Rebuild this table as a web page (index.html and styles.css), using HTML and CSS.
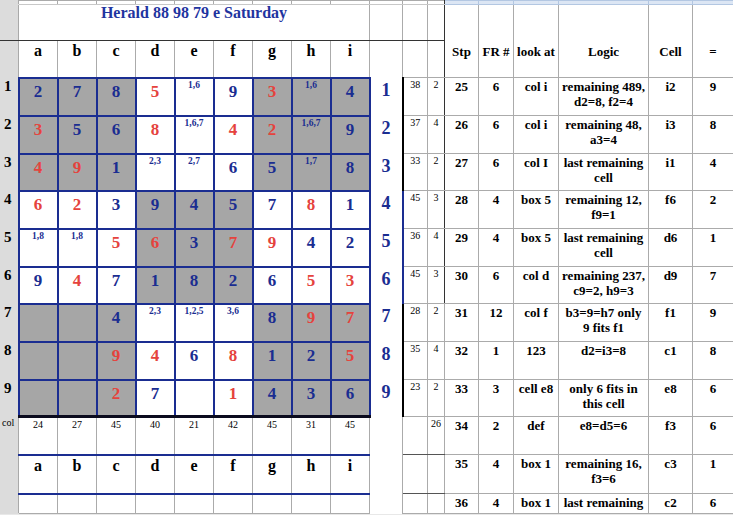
FILE: index.html
```
<!DOCTYPE html>
<html>
<head>
<meta charset="utf-8">
<link rel="stylesheet" href="styles.css">
</head>
<body>
<table class="sheet">
<colgroup>
<col class="w-hd"><col class="w-g"><col class="w-g"><col class="w-g"><col class="w-g"><col class="w-g"><col class="w-g"><col class="w-g"><col class="w-g"><col class="w-g"><col class="w-rn"><col class="w-s1"><col class="w-s2"><col class="w-stp"><col class="w-fr"><col class="w-look"><col class="w-lg"><col class="w-cell"><col class="w-eq">
</colgroup>
<tr class="r-strip"><td class="hd"></td><td></td><td></td><td></td><td></td><td></td><td></td><td></td><td></td><td></td><td></td><td></td><td class="dk"></td><td class="sel"></td><td class="sel"></td><td class="sel"></td><td class="sel"></td><td class="sel"></td><td class="sel"></td></tr>
<tr class="r-title"><td class="hd"></td><td colspan="9" class="ttl">Herald 88 98 79 e Saturday</td><td></td><td></td><td class="dk"></td><td class="open"></td><td class="open"></td><td class="open"></td><td class="open"></td><td class="open"></td><td class="open"></td></tr>
<tr class="r-hdr"><td class="hd"></td><td class="let">a</td><td class="let">b</td><td class="let">c</td><td class="let">d</td><td class="let">e</td><td class="let">f</td><td class="let">g</td><td class="let">h</td><td class="let">i</td><td></td><td></td><td class="dk"></td><td class="th">Stp</td><td class="th">FR #</td><td class="th">look at</td><td class="th">Logic</td><td class="th">Cell</td><td class="th">=</td></tr>
<tr class="r-38"><td class="hd rh">1</td><td class="g s">2</td><td class="g s">7</td><td class="g s">8</td><td class="g r">5</td><td class="g n">1,6</td><td class="g">9</td><td class="g s r">3</td><td class="g s n">1,6</td><td class="g s">4</td><td class="rn">1</td><td class="sm">38</td><td class="sm dk">2</td><td class="rt">25</td><td class="rt">6</td><td class="rt">col i</td><td class="rt lg">remaining 489, d2=8, f2=4</td><td class="rt">i2</td><td class="rt">9</td></tr>
<tr class="r-38"><td class="hd rh">2</td><td class="g s r">3</td><td class="g s">5</td><td class="g s">6</td><td class="g r">8</td><td class="g n">1,6,7</td><td class="g r">4</td><td class="g s r">2</td><td class="g s n">1,6,7</td><td class="g s">9</td><td class="rn">2</td><td class="sm">37</td><td class="sm dk">4</td><td class="rt">26</td><td class="rt">6</td><td class="rt">col i</td><td class="rt lg">remaining 48, a3=4</td><td class="rt">i3</td><td class="rt">8</td></tr>
<tr class="r-37"><td class="hd rh">3</td><td class="g s r">4</td><td class="g s r">9</td><td class="g s">1</td><td class="g n">2,3</td><td class="g n">2,7</td><td class="g">6</td><td class="g s">5</td><td class="g s n">1,7</td><td class="g s">8</td><td class="rn">3</td><td class="sm">33</td><td class="sm dk">2</td><td class="rt">27</td><td class="rt">6</td><td class="rt">col I</td><td class="rt lg">last remaining cell</td><td class="rt">i1</td><td class="rt">4</td></tr>
<tr class="r-38"><td class="hd rh">4</td><td class="g r">6</td><td class="g r">2</td><td class="g">3</td><td class="g s">9</td><td class="g s">4</td><td class="g s">5</td><td class="g">7</td><td class="g r">8</td><td class="g">1</td><td class="rn bl">4</td><td class="sm">45</td><td class="sm dk">3</td><td class="rt">28</td><td class="rt">4</td><td class="rt">box 5</td><td class="rt lg">remaining 12, f9=1</td><td class="rt">f6</td><td class="rt">2</td></tr>
<tr class="r-38"><td class="hd rh">5</td><td class="g n">1,8</td><td class="g n">1,8</td><td class="g r">5</td><td class="g s r">6</td><td class="g s">3</td><td class="g s r">7</td><td class="g r">9</td><td class="g">4</td><td class="g">2</td><td class="rn bl">5</td><td class="sm">36</td><td class="sm dk">4</td><td class="rt">29</td><td class="rt">4</td><td class="rt">box 5</td><td class="rt lg">last remaining cell</td><td class="rt">d6</td><td class="rt">1</td></tr>
<tr class="r-37"><td class="hd rh">6</td><td class="g">9</td><td class="g r">4</td><td class="g">7</td><td class="g s">1</td><td class="g s">8</td><td class="g s">2</td><td class="g">6</td><td class="g r">5</td><td class="g r">3</td><td class="rn bl">6</td><td class="sm">45</td><td class="sm dk">3</td><td class="rt">30</td><td class="rt">6</td><td class="rt">col d</td><td class="rt lg">remaining 237, c9=2, h9=3</td><td class="rt">d9</td><td class="rt">7</td></tr>
<tr class="r-38"><td class="hd rh">7</td><td class="g s"></td><td class="g s"></td><td class="g s">4</td><td class="g n">2,3</td><td class="g n">1,2,5</td><td class="g n">3,6</td><td class="g s">8</td><td class="g s r">9</td><td class="g s r">7</td><td class="rn">7</td><td class="sm">28</td><td class="sm">2</td><td class="rt">31</td><td class="rt">12</td><td class="rt">col f</td><td class="rt lg">b3=9=h7 only 9 fits f1</td><td class="rt">f1</td><td class="rt">9</td></tr>
<tr class="r-38"><td class="hd rh">8</td><td class="g s"></td><td class="g s"></td><td class="g s r">9</td><td class="g r">4</td><td class="g">6</td><td class="g r">8</td><td class="g s">1</td><td class="g s">2</td><td class="g s r">5</td><td class="rn">8</td><td class="sm">35</td><td class="sm">4</td><td class="rt">32</td><td class="rt">1</td><td class="rt">123</td><td class="rt lg">d2=i3=8</td><td class="rt">c1</td><td class="rt">8</td></tr>
<tr class="r-37"><td class="hd rh">9</td><td class="g s"></td><td class="g s"></td><td class="g s r">2</td><td class="g">7</td><td class="g"></td><td class="g r">1</td><td class="g s">4</td><td class="g s">3</td><td class="g s">6</td><td class="rn">9</td><td class="sm">23</td><td class="sm">2</td><td class="rt">33</td><td class="rt">3</td><td class="rt">cell e8</td><td class="rt lg">only 6 fits in this cell</td><td class="rt">e8</td><td class="rt">6</td></tr>
<tr class="r-38"><td class="hd lbl">col</td><td class="cv">24</td><td class="cv">27</td><td class="cv">45</td><td class="cv">40</td><td class="cv">21</td><td class="cv">42</td><td class="cv">45</td><td class="cv">31</td><td class="cv">45</td><td class="rx"></td><td class="sm db"></td><td class="sm db">26</td><td class="rt">34</td><td class="rt">2</td><td class="rt">def</td><td class="rt lg">e8=d5=6</td><td class="rt">f3</td><td class="rt">6</td></tr>
<tr class="r-39"><td class="hd"></td><td class="lv">a</td><td class="lv">b</td><td class="lv">c</td><td class="lv">d</td><td class="lv">e</td><td class="lv">f</td><td class="lv">g</td><td class="lv">h</td><td class="lv">i</td><td class="rx"></td><td class="db"></td><td class="db"></td><td class="rt">35</td><td class="rt">4</td><td class="rt">box 1</td><td class="rt lg">remaining 16, f3=6</td><td class="rt">c3</td><td class="rt">1</td></tr>
<tr class="r-last"><td class="hd"></td><td></td><td></td><td></td><td></td><td></td><td></td><td></td><td></td><td></td><td class="rx"></td><td></td><td></td><td class="rt">36</td><td class="rt">4</td><td class="rt">box 1</td><td class="rt">last remaining</td><td class="rt">c2</td><td class="rt">6</td></tr>
<tr class="r-end"><td></td><td></td><td></td><td></td><td></td><td></td><td></td><td></td><td></td><td></td><td></td><td></td><td></td><td></td><td></td><td></td><td></td><td></td><td></td></tr>
</table>
</body>
</html>
```
FILE: styles.css
```
html, body {
  margin: 0;
  padding: 0;
  background: #ffffff;
  overflow: hidden;
}
body {
  font-family: "Liberation Serif", "Times New Roman", serif;
  color: #000;
}
.sheet {
  border-collapse: collapse;
  table-layout: fixed;
  width: 733px;
}
.sheet td {
  border: 1px solid #ababab;
  padding: 0;
  vertical-align: top;
  text-align: center;
  overflow: hidden;
  white-space: nowrap;
}
.w-hd { width: 18px; }
.w-g { width: 39px; }
.w-rn { width: 33px; }
.w-s1 { width: 25px; }
.w-s2 { width: 17px; }
.w-stp { width: 34px; }
.w-fr { width: 35px; }
.w-look { width: 45px; }
.w-lg { width: 90px; }
.w-cell { width: 44px; }
.w-eq { width: 41px; }

.r-strip { height: 4px; }
.r-title { height: 36px; }
.r-hdr { height: 37px; }
.r-38 { height: 38px; }
.r-37 { height: 37px; }
.r-39 { height: 39px; }
.r-last { height: 20px; }
.r-end { height: 2px; }

.r-strip td { border-bottom-color: #c8c8c8; }
.sheet td.sel { background: #dce6f4; border-color: #b3c7e2; }
.r-title td { border-bottom-color: #333; }
.sheet td.open { border-bottom: hidden; }
.sheet td.dk { border-right-color: #333; }

.sheet td.hd {
  background: #dcdcdc;
  border-color: #dcdcdc #a9a9a9 #dcdcdc #dcdcdc;
}
.r-title td.hd { border-bottom-color: #333; }
.sheet td.rh {
  text-align: left;
  padding-left: 3px;
  font-weight: bold;
  font-size: 15px;
  line-height: 17px;
}
.sheet td.lbl {
  text-align: left;
  padding-left: 1px;
  font-size: 10px;
  line-height: 12px;
}

.ttl {
  color: #1f35a0;
  font-weight: bold;
  font-size: 16px;
  line-height: 15px;
}
.let, .lv {
  font-weight: bold;
  font-size: 16px;
  line-height: 18px;
  padding-top: 1px !important;
}
.th {
  font-weight: bold;
  font-size: 13px;
  line-height: 15px;
  padding-top: 3px !important;
}

.sheet td.g {
  border: 2px solid #1a2d91;
  color: #1a2d91;
  font-weight: bold;
  font-size: 17px;
  line-height: 20px;
  padding-top: 3px;
}
.sheet td.s { background: #a6a6a6; }
.sheet td.r { color: #e5433d; }
.sheet td.n {
  font-size: 9.5px;
  line-height: 11px;
  padding-top: 1px;
}

.sheet td.rn {
  border-top: hidden;
  border-bottom: hidden;
  border-right: 2px solid #000;
  color: #1a2d91;
  font-weight: bold;
  font-size: 18px;
  line-height: 20px;
  padding-top: 2px;
}
.sheet td.rn.bl { border-right-color: #1a2d91; }
.sheet td.rx { border-top: hidden; border-bottom: hidden; }

.sheet td.sm {
  font-size: 10px;
  line-height: 12px;
  padding-top: 1px;
}
.sheet td.db { border-bottom-color: #555; }

.sheet td.cv {
  font-size: 10px;
  line-height: 12px;
  padding-top: 1px;
  border-top: 3px solid #0b0b1e;
  border-bottom: 2px solid #1a2d91;
}
.sheet td.lv { border-bottom: 2px solid #1a2d91; }

.sheet td.rt {
  font-weight: bold;
  font-size: 13px;
  line-height: 15px;
  padding: 1px 3px 0;
}
.sheet td.lg { white-space: normal; }

.r-end td { background: #e8e8e8; border-color: #e8e8e8; }
```
